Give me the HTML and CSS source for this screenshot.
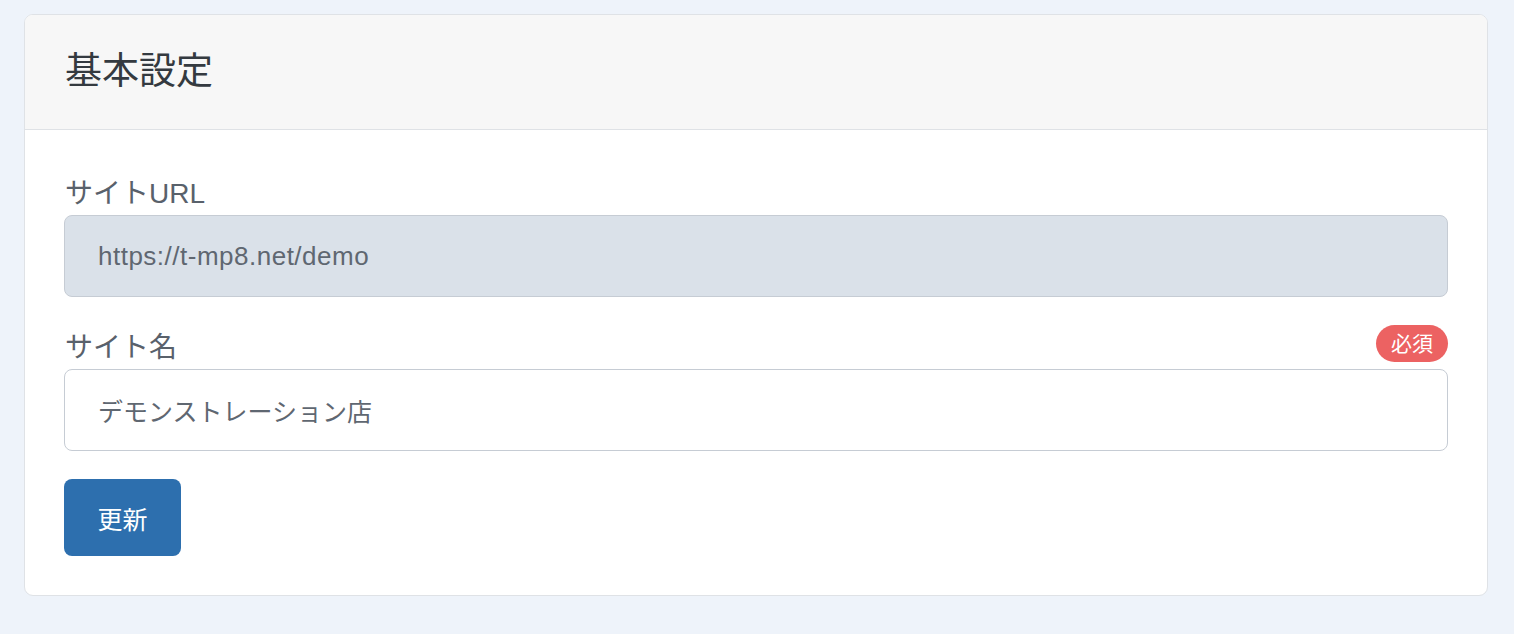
FILE: index.html
```html
<!DOCTYPE html>
<html lang="ja">
<head>
<meta charset="utf-8">
<title>基本設定</title>
<link rel="stylesheet" href="styles.css">
</head>
<body>
<div class="card">
  <div class="card-header">
    <h1 class="card-title">基本設定</h1>
  </div>
  <div class="card-body">
    <div class="form-group">
      <div class="label-row"><label class="label">サイトURL</label></div>
      <div class="input input-readonly input-latin">https://t-mp8.net/demo</div>
    </div>
    <div class="form-group">
      <div class="label-row"><label class="label">サイト名</label><span class="badge">必須</span></div>
      <div class="input">デモンストレーション店</div>
    </div>
    <button class="btn" type="button">更新</button>
  </div>
</div>
</body>
</html>
```
FILE: styles.css
```css
* { box-sizing: border-box; }
html, body { margin: 0; padding: 0; }
body {
  background: #eef3fa;
  font-family: "Liberation Sans", "Noto Sans CJK JP", sans-serif;
  padding: 14px 26px 38px 24px;
  height: 634px;
}
.card {
  background: #ffffff;
  border: 1px solid #dfe2e6;
  border-radius: 9px;
  overflow: hidden;
}
.card-header {
  background: #f7f7f7;
  border-bottom: 1px solid #dfe2e6;
  padding: 40px 40px 40px 40px;
  height: 115px;
}
.card-title {
  margin: 0;
  font-weight: 400;
  font-size: 37px;
  line-height: 34px;
  color: #343a40;
}
.card-body {
  padding: 40px 39px 39px 39px;
}
.form-group {
  margin-bottom: 27px;
}
.form-group + .form-group { margin-bottom: 28px; }
.label-row {
  display: flex;
  align-items: center;
  justify-content: space-between;
  height: 45px;
  padding-left: 1px;
  padding-top: 2px;
}
.label {
  font-size: 28px;
  line-height: 36px;
  color: #59616b;
}
.badge {
  background: #ec6262;
  color: #ffffff;
  font-size: 21px;
  line-height: 37px;
  height: 37px;
  padding: 0 15px;
  border-radius: 19px;
  margin-top: -8px;
}
.input {
  height: 82px;
  border: 1px solid #c6ccd4;
  border-radius: 8px;
  padding: 0 33px;
  display: flex;
  align-items: center;
  font-size: 25px;
  color: #5f6771;
}
.input-latin {
  font-size: 26px;
  letter-spacing: 0.5px;
}
.input-readonly {
  background: #dae1e9;
}
.btn {
  display: block;
  width: 117px;
  height: 77px;
  border: 0;
  border-radius: 8px;
  background: #2d6fae;
  color: #ffffff;
  font-family: "Liberation Sans", "Noto Sans CJK JP", sans-serif;
  font-size: 25px;
  padding: 0;
  margin-left: 0;
}
```
